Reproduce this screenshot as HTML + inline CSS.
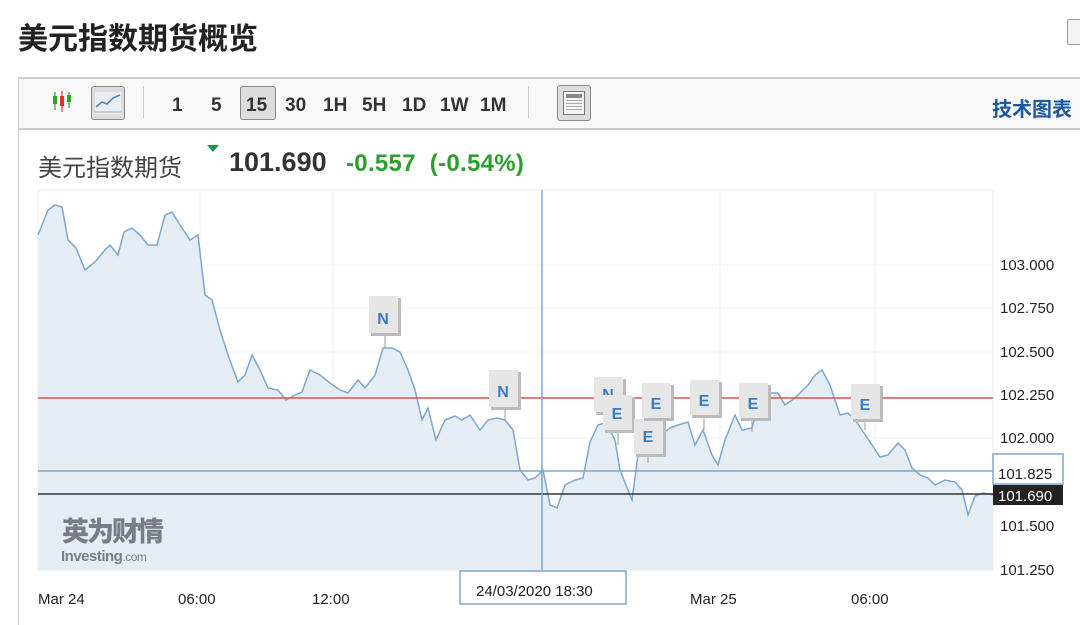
<!DOCTYPE html>
<html><head><meta charset="utf-8"><style>
body{margin:0;width:1080px;height:625px;background:#fff;overflow:hidden;position:relative;font-family:"Liberation Sans","Noto Sans CJK SC",sans-serif}
.t{position:absolute;left:18px;top:14px;font-size:30px;font-weight:bold;color:#222;letter-spacing:0px}
.tb{position:absolute;left:18px;top:77px;width:1070px;height:49px;border-top:2px solid #ccc;border-left:1px solid #ccc;border-bottom:2px solid #ccc;background:#f8f8f8}
.pl{position:absolute;left:18px;top:128px;width:1px;height:497px;background:#ccc}
.tf{position:absolute;top:95px;font-size:19px;color:#333;font-weight:bold}
</style></head><body>
<div class="t">美元指数期货概览</div>
<div style="position:absolute;left:1067px;top:19px;width:20px;height:24px;border:1px solid #999;border-radius:2px;background:#f4f4f4"></div>
<div class="tb"></div><div class="pl"></div>
<svg style="position:absolute;left:50px;top:88px" width="30" height="28"><line x1="5" y1="4" x2="5" y2="22" stroke="#1a8a1a"/><rect x="3" y="8" width="4" height="8" fill="#2a2"/><line x1="12" y1="3" x2="12" y2="24" stroke="#c22"/><rect x="10" y="8" width="4" height="10" fill="#d33"/><line x1="19" y1="4" x2="19" y2="20" stroke="#1a8a1a"/><rect x="17" y="7" width="4" height="7" fill="#2a2"/></svg>
<div style="position:absolute;left:91px;top:86px;width:32px;height:32px;border:1px solid #888;border-radius:3px;background:#dcdcdc"><svg width="32" height="32"><rect x="3" y="5" width="26" height="22" fill="#e8eef4"/><polyline points="4,20 10,15 15,17 21,11 28,8" fill="none" stroke="#4a80c0" stroke-width="1.5"/><line x1="3" y1="25" x2="29" y2="25" stroke="#aaa"/></svg></div>
<div style="position:absolute;left:143px;top:86px;width:1px;height:32px;background:#ccc"></div>
<div class="tf" style="left:172px">1</div><div class="tf" style="left:211px">5</div>
<div style="position:absolute;left:240px;top:86px;width:34px;height:32px;border:1px solid #888;border-radius:3px;background:#dcdcdc"></div>
<div class="tf" style="left:246px">15</div><div class="tf" style="left:285px">30</div><div class="tf" style="left:323px">1H</div><div class="tf" style="left:362px">5H</div><div class="tf" style="left:402px">1D</div><div class="tf" style="left:440px">1W</div><div class="tf" style="left:480px">1M</div>
<div style="position:absolute;left:528px;top:86px;width:1px;height:32px;background:#ccc"></div>
<div style="position:absolute;left:557px;top:85px;width:32px;height:34px;border:1px solid #888;border-radius:3px;background:#ddd"><div style="position:absolute;left:5px;top:5px;width:20px;height:22px;border:1px solid #777;background:#f4f4f4"><div style="margin:2px;height:4px;background:#888"></div><div style="margin:2px;height:10px;background:repeating-linear-gradient(#aaa 0 1px,transparent 1px 3px)"></div></div></div>
<div style="position:absolute;left:992px;top:93px;font-size:20px;font-weight:bold;color:#1c5aa0">技术图表</div>
<div style="position:absolute;left:38px;top:148px;font-size:24px;color:#444">美元指数期货</div>
<div style="position:absolute;left:207px;top:145px;width:0;height:0;border-left:6px solid transparent;border-right:6px solid transparent;border-top:7px solid #1a9a4a"></div>
<div style="position:absolute;left:229px;top:147px;font-size:27px;font-weight:bold;color:#333">101.690</div>
<div style="position:absolute;left:346px;top:150px;font-size:24px;font-weight:bold;color:#2aa02a;letter-spacing:0.3px">-0.557 &nbsp;(-0.54%)</div>
<svg style="position:absolute;left:0;top:0" width="1080" height="625">
<rect x="38" y="190" width="955" height="380" fill="#fff" stroke="#eee"/>
<g stroke="#eef0f3"><line x1="200" y1="190" x2="200" y2="570"/><line x1="333" y1="190" x2="333" y2="570"/><line x1="720" y1="190" x2="720" y2="570"/><line x1="875" y1="190" x2="875" y2="570"/><line x1="38" y1="265" x2="993" y2="265"/><line x1="38" y1="308" x2="993" y2="308"/><line x1="38" y1="352" x2="993" y2="352"/><line x1="38" y1="438" x2="993" y2="438"/><line x1="38" y1="526" x2="993" y2="526"/></g>
<polygon fill="#e4edf4" points="38,570 38,235 48,210 55,205 62,207 68,240 76,248 85,270 95,262 105,250 110,245 118,255 124,232 132,228 140,235 148,245 157,245 165,215 172,212 180,225 190,240 198,235 205,295 212,300 220,330 228,355 238,382 245,375 252,355 260,370 268,388 278,390 286,400 295,395 302,392 310,370 320,375 330,383 340,390 348,393 358,380 365,388 375,375 383,348 392,348 400,352 408,370 415,390 422,420 428,408 436,440 445,420 455,416 462,420 470,415 480,430 488,420 497,418 505,420 513,430 520,470 528,480 535,478 543,470 550,505 557,508 565,485 575,480 583,478 590,442 598,425 605,423 610,430 615,440 620,470 628,490 632,500 638,455 645,445 650,445 660,435 670,428 678,425 688,422 695,445 703,430 712,455 718,465 725,440 735,415 742,430 752,428 760,400 768,393 778,393 785,405 795,398 808,385 815,375 822,370 830,385 840,415 848,413 855,420 862,430 872,445 880,457 888,455 898,443 905,450 912,468 920,475 928,478 935,485 945,480 955,482 962,490 968,515 975,496 983,493 993,495 993,570"/>
<polyline fill="none" stroke="#7fa6cf" stroke-width="1.5" points="38,235 48,210 55,205 62,207 68,240 76,248 85,270 95,262 105,250 110,245 118,255 124,232 132,228 140,235 148,245 157,245 165,215 172,212 180,225 190,240 198,235 205,295 212,300 220,330 228,355 238,382 245,375 252,355 260,370 268,388 278,390 286,400 295,395 302,392 310,370 320,375 330,383 340,390 348,393 358,380 365,388 375,375 383,348 392,348 400,352 408,370 415,390 422,420 428,408 436,440 445,420 455,416 462,420 470,415 480,430 488,420 497,418 505,420 513,430 520,470 528,480 535,478 543,470 550,505 557,508 565,485 575,480 583,478 590,442 598,425 605,423 610,430 615,440 620,470 628,490 632,500 638,455 645,445 650,445 660,435 670,428 678,425 688,422 695,445 703,430 712,455 718,465 725,440 735,415 742,430 752,428 760,400 768,393 778,393 785,405 795,398 808,385 815,375 822,370 830,385 840,415 848,413 855,420 862,430 872,445 880,457 888,455 898,443 905,450 912,468 920,475 928,478 935,485 945,480 955,482 962,490 968,515 975,496 983,493 993,495"/>
<line x1="38" y1="398" x2="993" y2="398" stroke="#e05050" stroke-width="1.5"/>
<line x1="38" y1="471" x2="993" y2="471" stroke="#7fa6cf" stroke-width="1.5"/>
<line x1="38" y1="494" x2="993" y2="494" stroke="#333" stroke-width="1.5"/>
<line x1="542" y1="190" x2="542" y2="570" stroke="#7fa6cf" stroke-width="1.5"/>
<g font-family="Liberation Sans,sans-serif" font-size="16" font-weight="bold" fill="#3a7bc8" text-anchor="middle">
<g><line x1="385" y1="336" x2="385" y2="348" stroke="#999"/><rect x="371" y="298" width="30" height="38" fill="#bbb"/><rect x="369" y="296" width="29" height="37" fill="#e6e6e6"/><text x="383" y="324">N</text></g>
<g><line x1="505" y1="410" x2="505" y2="420" stroke="#999"/><rect x="491" y="372" width="30" height="38" fill="#bbb"/><rect x="489" y="370" width="29" height="37" fill="#e6e6e6"/><text x="503" y="397">N</text></g>
<g><rect x="596" y="379" width="30" height="36" fill="#bbb"/><rect x="594" y="377" width="29" height="35" fill="#e6e6e6"/><text x="608" y="400">N</text></g>
<g><line x1="618" y1="433" x2="618" y2="445" stroke="#999"/><rect x="605" y="397" width="30" height="36" fill="#bbb"/><rect x="603" y="395" width="29" height="35" fill="#e6e6e6"/><text x="617" y="419">E</text></g>
<g><line x1="648" y1="455" x2="648" y2="463" stroke="#999"/><rect x="636" y="421" width="30" height="36" fill="#bbb"/><rect x="634" y="419" width="29" height="35" fill="#e6e6e6"/><text x="648" y="442">E</text></g>
<g><rect x="644" y="385" width="30" height="36" fill="#bbb"/><rect x="642" y="383" width="29" height="35" fill="#e6e6e6"/><text x="656" y="409">E</text></g>
<g><line x1="704" y1="418" x2="704" y2="430" stroke="#999"/><rect x="692" y="382" width="30" height="36" fill="#bbb"/><rect x="690" y="380" width="29" height="35" fill="#e6e6e6"/><text x="704" y="406">E</text></g>
<g><line x1="752" y1="420" x2="752" y2="432" stroke="#999"/><rect x="741" y="385" width="30" height="36" fill="#bbb"/><rect x="739" y="383" width="29" height="35" fill="#e6e6e6"/><text x="753" y="409">E</text></g>
<g><line x1="865" y1="420" x2="865" y2="430" stroke="#999"/><rect x="853" y="386" width="30" height="36" fill="#bbb"/><rect x="851" y="384" width="29" height="35" fill="#e6e6e6"/><text x="865" y="410">E</text></g>
</g>
<text x="62" y="541" font-family="Noto Sans CJK SC,sans-serif" font-size="27" font-weight="900" fill="#7a7e84" letter-spacing="-2">英为财情</text>
<text x="61" y="561" font-family="Liberation Sans,sans-serif" font-size="15" font-weight="bold" fill="#7a7e84" letter-spacing="-0.5">Investing<tspan font-weight="normal" font-size="12">.com</tspan></text>
<g font-family="Liberation Sans,sans-serif" font-size="15" fill="#222">
<text x="1000" y="270">103.000</text><text x="1000" y="313">102.750</text><text x="1000" y="357">102.500</text><text x="1000" y="400">102.250</text><text x="1000" y="443">102.000</text><text x="1000" y="531">101.500</text><text x="1000" y="575">101.250</text>
<rect x="993" y="454" width="70" height="30" fill="#fff" stroke="#7fa6cf" stroke-width="1.5"/><text x="998" y="479">101.825</text>
<rect x="993" y="485" width="70" height="20" fill="#222"/><text x="998" y="501" fill="#fff">101.690</text>
<text x="38" y="604">Mar 24</text><text x="178" y="604">06:00</text><text x="312" y="604">12:00</text><text x="690" y="604">Mar 25</text><text x="851" y="604">06:00</text>
<rect x="460" y="571" width="166" height="33" fill="#fff" stroke="#7fa6cf" stroke-width="1.5"/><text x="476" y="596">24/03/2020 18:30</text>
</g>
</svg>
</body></html>
